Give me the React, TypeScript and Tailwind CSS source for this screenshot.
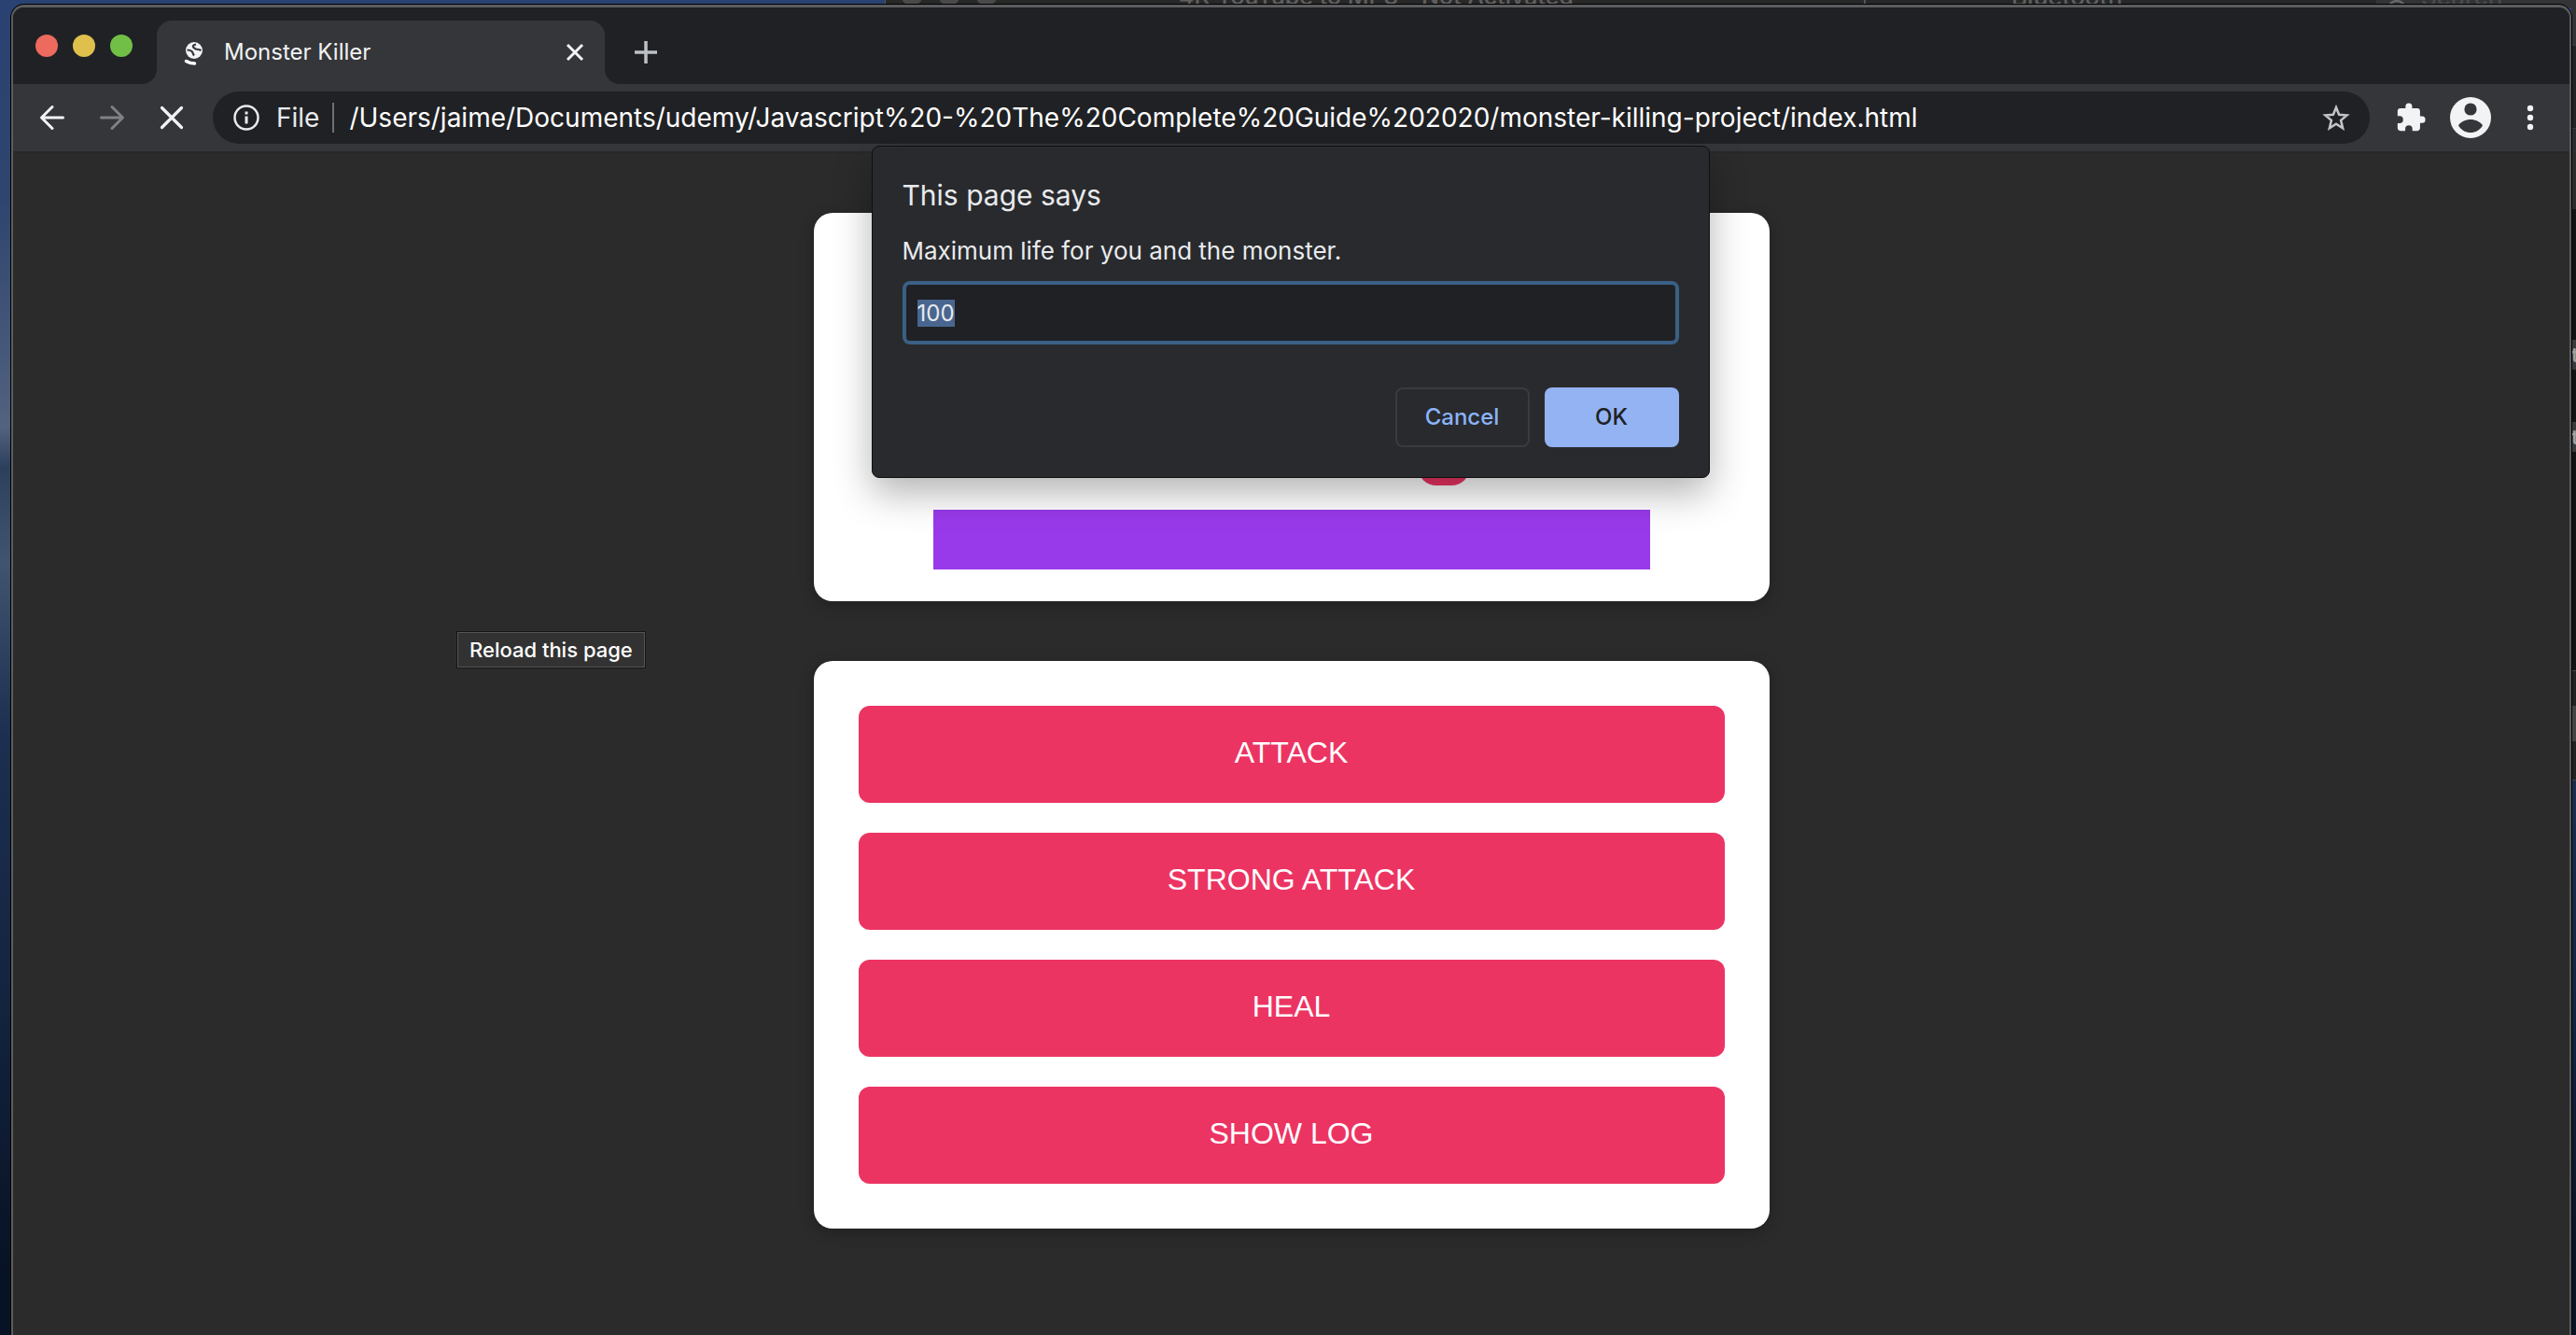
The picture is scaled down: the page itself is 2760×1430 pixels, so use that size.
import { useEffect, useRef, type ReactNode } from 'react';

const ACTIONS = ['ATTACK', 'STRONG ATTACK', 'HEAL', 'SHOW LOG'];

const URL_TEXT =
  '/Users/jaime/Documents/udemy/Javascript%20-%20The%20Complete%20Guide%202020/monster-killing-project/index.html';

function IconButton({ label, className, children }: { label: string; className: string; children: ReactNode }) {
  return (
    <button type="button" aria-label={label} className={`flex shrink-0 items-center justify-center ${className}`}>
      {children}
    </button>
  );
}

/* Parts of other windows and the wallpaper that stay visible round the browser. */
function Desktop() {
  return (
    <div aria-hidden="true" className="absolute inset-0 overflow-hidden bg-[linear-gradient(180deg,#2a4272_0%,#2f456f_15%,#52627f_32%,#2c3f5c_35%,#41546f_42%,#1c2f50_55%,#13243f_75%,#081225_95%)]">
      <div className="absolute top-0 right-0 left-[948px] flex h-2 overflow-hidden text-[26px] leading-none font-medium text-[#606060]">
        <div className="relative h-full w-[1049px] border-l border-[#555555] bg-[#282828]">
          <div className="absolute -top-[18px] left-4 flex gap-4">
            <span className="size-6 rounded-full bg-[#4a4a4a]" />
            <span className="size-6 rounded-full bg-[#4a4a4a]" />
            <span className="size-6 rounded-full bg-[#4a4a4a]" />
          </div>
          <span className="absolute -top-4 left-[314px] text-[25px] whitespace-nowrap">4K YouTube to MP3 - Not Activated</span>
        </div>
        <div className="relative h-full grow border-l-2 border-[#555555] bg-[#262728]">
          <span className="absolute -top-4 left-[156px]">Bluetooth</span>
          <div className="absolute top-0 right-0 h-2 w-[214px] bg-[#333436]">
            <svg viewBox="0 0 24 24" className="absolute top-0 left-3 size-6" fill="none" stroke="#666769" strokeWidth="2.5">
              <circle cx="10" cy="10" r="9" />
            </svg>
            <span className="absolute -top-4 left-12 text-[#4a4b4d]">Search</span>
          </div>
        </div>
      </div>
      <div className="absolute top-0 right-0 flex w-[5px] flex-col bg-[#121314] text-[22px] leading-8 font-semibold text-[#a0a0a0]">
        <div className="h-12 bg-[#333436]" />
        <div className="h-[90px] border-y border-[#3c3c3e] bg-[#222324]" />
        <div className="h-[86px] bg-[#2b2c2d]" />
        <div className="mt-[140px] h-8 bg-[#3a3a3b]">t</div>
        <div className="mt-14 h-8 bg-[#3a3a3b]">t</div>
        <div className="mt-[234px] h-[38px] border-t border-[#444444] bg-[#222222]" />
        <div className="h-[38px] bg-[#444444]" />
        <div className="h-[42px] border-b border-[#444444] bg-[#222222]" />
      </div>
    </div>
  );
}

function TabStrip() {
  return (
    <div className="flex h-[82px] items-end bg-[#202124]">
      <div className="flex h-full w-[154px] items-center gap-4 pl-6">
        <button type="button" aria-label="Close window" className="size-6 rounded-full bg-[#ec6a5e]" />
        <button type="button" aria-label="Minimize window" className="size-6 rounded-full bg-[#e0c04c]" />
        <button type="button" aria-label="Zoom window" className="size-6 rounded-full bg-[#71bf46]" />
      </div>
      <div className="relative flex h-[68px] w-[480px] items-center rounded-t-2xl bg-[#35363a] pr-4 pl-7">
        <svg aria-hidden="true" viewBox="0 0 16 16" className="absolute bottom-0 -left-4 size-4">
          <path d="M16 0v16H0A16 16 0 0 0 16 0z" fill="#35363a" />
        </svg>
        <svg aria-hidden="true" viewBox="0 0 16 16" className="absolute -right-4 bottom-0 size-4">
          <path d="M0 0v16h16A16 16 0 0 1 0 0z" fill="#35363a" />
        </svg>
        <svg aria-hidden="true" viewBox="0 0 24 28" className="h-7 w-6 shrink-0" fill="none">
          <circle cx="12" cy="12" r="9" fill="#f1f3f4" />
          <path
            d="M4.500 11.500c2 0 3.500 0 5 1.500s1 2.500 2.500 4.500M14 5.500c-3 .5-4 2-2.500 3.500s2.500 2 4.500 2 2.500.5 3.500 1"
            stroke="#35363a"
            strokeWidth="2.200"
          />
          <path d="M3.500 23.500q4 2.500 9 2.500" stroke="#fff" strokeWidth="3.500" strokeLinecap="round" />
        </svg>
        <span className="grow pl-5 text-[24px] leading-8 text-[#f1f3f4]">Monster Killer</span>
        <IconButton label="Close tab" className="size-8">
          <svg viewBox="0 0 24 24" className="size-6" stroke="#f1f3f4" strokeWidth="3">
            <path d="M4 4l16 16M20 4L4 20" />
          </svg>
        </IconButton>
      </div>
      <IconButton label="New tab" className="ml-6 h-[68px] w-10">
        <svg viewBox="0 0 24 24" className="size-6" stroke="#bdc1c6" strokeWidth="3.500">
          <path d="M12 0v24M0 12h24" />
        </svg>
      </IconButton>
    </div>
  );
}

function Toolbar() {
  return (
    <div className="flex h-[72px] items-center bg-[#35363a] pr-[22px] pl-4">
      <IconButton label="Back" className="size-[52px]">
        <svg viewBox="0 0 28 28" className="size-7" fill="none" stroke="#f1f3f4" strokeWidth="3" strokeLinecap="round" strokeLinejoin="round">
          <path d="M25.500 14H3M14 2.500L2.500 14 14 25.500" />
        </svg>
      </IconButton>
      <IconButton label="Forward" className="ml-3 size-[52px]">
        <svg viewBox="0 0 28 28" className="size-7" fill="none" stroke="#808184" strokeWidth="3" strokeLinecap="round" strokeLinejoin="round">
          <path d="M2.500 14H25M14 2.500L25.500 14 14 25.500" />
        </svg>
      </IconButton>
      <IconButton label="Stop loading" className="ml-3 size-[52px]">
        <svg viewBox="0 0 28 28" className="size-7" stroke="#f1f3f4" strokeWidth="3.200" strokeLinecap="round">
          <path d="M3.500 3.500l21 21M24.500 3.500l-21 21" />
        </svg>
      </IconButton>
      <div className="ml-[18px] flex h-14 min-w-0 grow items-center rounded-full bg-[#202124] pr-5 pl-[22px] text-[28px] leading-9">
        <svg aria-hidden="true" viewBox="0 0 28 28" className="size-7 shrink-0" fill="none" stroke="#e8eaed" strokeWidth="2.500">
          <circle cx="14" cy="14" r="12.500" />
          <path d="M14 12.500v8M14 7.500v3" strokeWidth="3" />
        </svg>
        <span className="pl-[18px] text-[#e8eaed]">File</span>
        <span className="mr-4 ml-3.5 h-8 w-0.5 shrink-0 bg-[#6f7073]" />
        <input aria-label="Address" readOnly value={URL_TEXT} className="min-w-0 grow bg-transparent text-white outline-none" />
        <IconButton label="Bookmark this page" className="size-8">
          <svg viewBox="0 0 32 32" className="size-8" fill="none" stroke="#c4c5c7" strokeWidth="2.500">
            <path d="M16 5l3.100 7.700 8.500.7-6.500 5.500 2 8.300L16 22.700l-7.100 4.500 2-8.300-6.500-5.500 8.500-.7z" />
          </svg>
        </IconButton>
      </div>
      <IconButton label="Extensions" className="ml-6 size-10">
        <svg viewBox="0 0 24 24" className="size-[34px]" fill="#f1f3f4">
          <path d="M20.500 11H19V7c0-1.100-.9-2-2-2h-4V3.500a2.500 2.500 0 0 0-5 0V5H4c-1.100 0-2 .9-2 2v3.800h1.500a2.700 2.700 0 0 1 0 5.400H2V20c0 1.100.9 2 2 2h3.800v-1.500a2.700 2.700 0 0 1 5.400 0V22H17c1.100 0 2-.9 2-2v-4h1.500a2.500 2.500 0 0 0 0-5z" />
        </svg>
      </IconButton>
      <IconButton label="Profile" className="ml-[22px] size-11">
        <svg viewBox="0 0 44 44" className="size-11">
          <circle cx="22" cy="22" r="22" fill="#f1f3f4" />
          <circle cx="22" cy="13" r="6.600" fill="#35363a" />
          <path d="M9 30.500c2-4 8-6.500 13-6.500s11 2.500 13 6.500c-3 5-8 7.500-13 7.500S12 35.500 9 30.500z" fill="#35363a" />
        </svg>
      </IconButton>
      <IconButton label="Menu" className="ml-[22px] size-10">
        <svg viewBox="0 0 8 28" className="h-7 w-2" fill="#f1f3f4">
          <circle cx="4" cy="4" r="3.200" />
          <circle cx="4" cy="14" r="3.200" />
          <circle cx="4" cy="24" r="3.200" />
        </svg>
      </IconButton>
    </div>
  );
}

function PromptDialog() {
  const inputRef = useRef<HTMLInputElement>(null);
  useEffect(() => {
    inputRef.current?.focus();
    inputRef.current?.select();
  }, []);

  return (
    <form
      role="dialog"
      aria-labelledby="prompt-title"
      className="absolute -top-2 right-0.5 left-0 mx-auto w-[898px] rounded-lg border border-[#101012] bg-[#292a2d] px-8 py-8 text-[#e8eaed] shadow-[0_16px_40px_rgba(0,0,0,0.3)]"
    >
      <h1 id="prompt-title" className="text-[30px] leading-10">
        This page says
      </h1>
      <label htmlFor="prompt-value" className="mt-6 block text-[26px] leading-8">
        Maximum life for you and the monster.
      </label>
      <input
        id="prompt-value"
        ref={inputRef}
        defaultValue="100"
        className="mt-4 block h-[68px] w-full rounded-lg border-4 border-[#3a6085] bg-[#202124] px-3 text-[24px] leading-8 outline-none selection:bg-[#48668f] selection:text-[#e8eaed]"
      />
      <div className="mt-[46px] flex justify-end gap-4 text-[24px] leading-8 font-medium">
        <button type="button" className="h-16 w-36 rounded-lg border-2 border-[#3a3b3f] text-[#8ab4f8]">
          Cancel
        </button>
        <button type="button" className="h-16 w-36 rounded-lg bg-[#93b3f3] text-[#202124]">
          OK
        </button>
      </div>
    </form>
  );
}

function Game() {
  return (
    <main className="mx-auto flex w-[1024px] max-w-full flex-col gap-16 pt-16">
      <section aria-label="Health" className="flex h-[416px] flex-col items-center justify-end rounded-[20px] bg-white pb-[34px] shadow-[0_4px_16px_rgba(0,0,0,0.26)]">
        <div className="mb-[26px] ml-[326px] h-12 w-14 rounded-[20px] bg-[#ec3463]" />
        <div role="meter" aria-label="Player health" aria-valuenow={100} className="h-16 w-3/4 bg-[#993aea]" />
      </section>
      <section
        aria-label="Controls"
        className="flex flex-col gap-8 rounded-[20px] bg-white p-12 font-['Liberation_Sans',sans-serif] shadow-[0_4px_16px_rgba(0,0,0,0.26)]"
      >
        {ACTIONS.map((action) => (
          <button key={action} type="button" className="h-26 rounded-xl bg-[#ec3463] pb-1 text-[32px] leading-10 text-white">
            {action}
          </button>
        ))}
      </section>
    </main>
  );
}

export default function App() {
  return (
    <div className="relative flex h-screen flex-col overflow-hidden pt-[5px] pr-[5px] pl-3 font-[Inter,sans-serif]">
      <Desktop />
      <div className="relative flex grow flex-col overflow-hidden rounded-t-[14px] border-x-2 border-t-[3px] border-[#5c5d5f] bg-[#2b2b2b] shadow-[0_0_0_1px_#000]">
        <TabStrip />
        <Toolbar />
        <div className="relative grow border-t-2 border-[#28282a]">
          <Game />
          <PromptDialog />
          <div
            role="tooltip"
            className="absolute top-[513px] left-[476px] border border-[#555555] bg-[#323232] px-3 py-0.5 text-[22px] leading-8 font-medium text-white shadow-[0_0_0_1px_#151515]"
          >
            Reload this page
          </div>
        </div>
      </div>
    </div>
  );
}
